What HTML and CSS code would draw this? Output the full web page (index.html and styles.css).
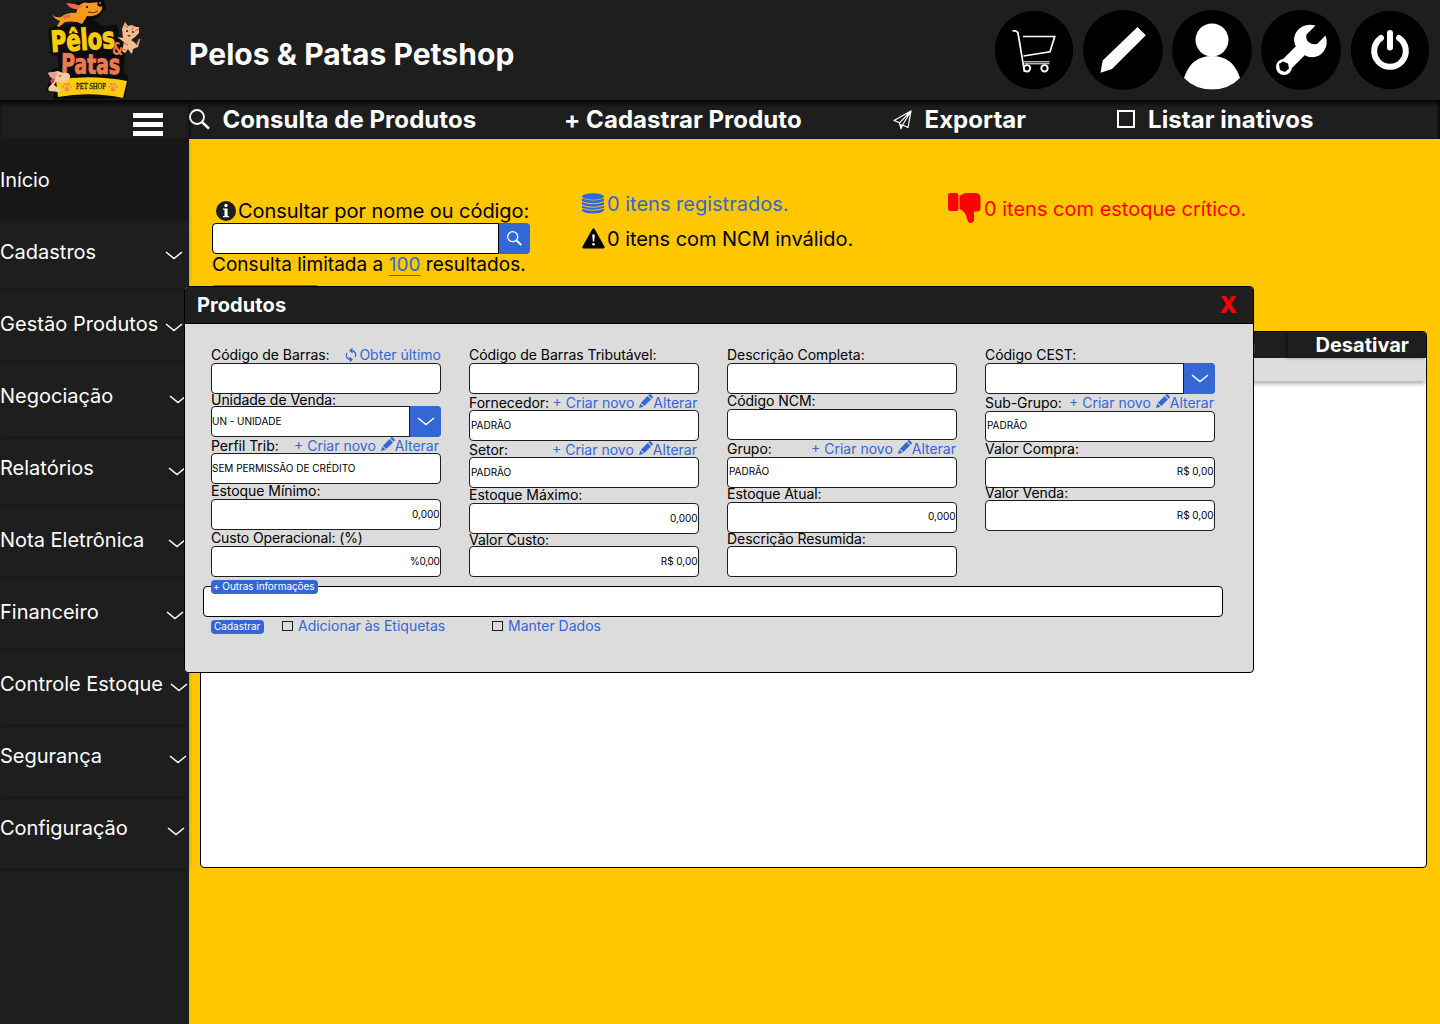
FILE: index.html
```html
<!DOCTYPE html>
<html lang="pt-BR">
<head>
<meta charset="utf-8">
<title>Pelos &amp; Patas Petshop</title>
<link rel="stylesheet" href="styles.css">
</head>
<body>
<svg class="defs" width="0" height="0" aria-hidden="true">
  <symbol id="chevron" viewBox="0 0 18 9"><path d="M1 1 9 7.6 17 1" fill="none" stroke="currentColor" stroke-width="1.5"/></symbol>
  <symbol id="search" viewBox="0 0 21 21"><circle cx="8" cy="8" r="7" fill="none" stroke="currentColor" stroke-width="1.8"/><path d="m13 13 7 6.6" stroke="currentColor" stroke-width="2.6"/></symbol>
  <symbol id="pencil" viewBox="0 0 14 14"><path d="m0 14 1.2-4.6 3.4 3.4zM1.9 8.7 8.6 2l3.4 3.4-6.7 6.7zM9.3 1.3 10.1.5q.8-.8 1.6 0l1.8 1.8q.8.8 0 1.6l-.8.8z" fill="currentColor"/></symbol>
  <symbol id="paw" viewBox="0 0 10 10"><g fill="#f58352"><path d="M5 4.6c2 0 3.3 4.500 1.400 4.600Q5 8.600 3.600 9.200C1.700 9.100 3 4.600 5 4.600z"/><circle cx="1.300" cy="4.800" r="1.100"/><circle cx="3.500" cy="2.300" r="1.200"/><circle cx="6.500" cy="2.300" r="1.200"/><circle cx="8.700" cy="4.800" r="1.100"/></g></symbol>
</svg>

<header class="topbar">
  <svg class="logo" viewBox="0 0 110 100" width="110" height="100">
    <path d="M10 29 52 21 64 28 76 26 79 40 84 50 82 72 87 78 84 97 15 98 16 90 8 90 14 70 20 69 19 54 12 54z" fill="#0c0c0b" stroke="#0c0c0b" stroke-width="3" stroke-linejoin="round"/>
    <path d="M36 2 50 0 64 0 66 8 59 17 48 22 34 18z" fill="#0c0c0b"/>
    <path d="M12 14Q15 18 21 17 28 12 36 13L38 7Q42 1 49 3L60 2Q64 6 61 11 57 17 47 16L44 21 42 24 37 22Q30 21 25 22L19 27 17 26 20 21Q14 19 12 14z" fill="#f7981f"/>
    <path d="M38 9Q31 10 26 3L34 4 42 6z" fill="#ee6b46"/>
    <path d="M23 17Q27 12 31 16 29 19 25 19z" fill="#ee6b46"/>
    <path d="M48 12Q54 14 58 11" fill="none" stroke="#5a2c0c" stroke-width="1"/>
    <ellipse cx="60.500" cy="4" rx="3.200" ry="2.800" fill="#070707"/><circle cx="60" cy="3" r=".8" fill="#fff"/>
    <circle cx="47" cy="7" r="1.100" fill="#111"/>
    <g font-family="DejaVu Sans Condensed, DejaVu Sans, sans-serif" font-weight="700">
      <text transform="translate(11.500 52) rotate(-4)" font-size="29" textLength="64" lengthAdjust="spacingAndGlyphs" fill="#fbcb0c" stroke="#fbcb0c" stroke-width="1.200">Pêlos</text>
      <text transform="translate(21 73) rotate(1)" font-size="27" textLength="59" lengthAdjust="spacingAndGlyphs" fill="#ed7950" stroke="#ed7950">Patas</text>
      <text x="72" y="55" font-size="18" textLength="11" lengthAdjust="spacingAndGlyphs" fill="#ed7950">&amp;</text>
    </g>
    <path d="M16 80Q50 74 87 81L83 98Q50 91 18 97z" fill="#facb0e"/>
    <use href="#paw" x="22" y="82" width="10" height="10"/><use href="#paw" x="68" y="82" width="10" height="10"/>
    <text x="36" y="88.500" font-family="Liberation Serif, serif" font-size="9" textLength="30" lengthAdjust="spacingAndGlyphs" fill="#25200a" stroke="#25200a" stroke-width=".3">PET SHOP</text>
    <path d="M8 73 18 71 23 73Q31 72 30 78L24 83 16 82 14 85 21 90 19 92 9 91Q7 88 11 85L14 80z" fill="#f3cda0"/>
    <path d="M8 73Q12 71 18 73L14 80 10 77z" fill="#ef9c91"/><path d="M10 80 15 78 14 83 11 83z" fill="#d93f62"/>
    <circle cx="31" cy="71" r="1.300" fill="#080808"/><circle cx="20" cy="76" r=".8" fill="#222"/>
    <path d="M85 22 88 26 92 25 96 27 99 27 99 33 95 37 91 40 94 42 97 45 99 39 100 40 98 47 93 49 92 54 90 52 88 49 85 53 82 51 84 42 77 37 83 38 82 29z" fill="#f3bd8e"/>
    <path d="m85 25 3 3M94 27l-3 3M99 29l-4 2M97 44l3-5M84 43l4 2M82 49l4 1" stroke="#e67f55" stroke-width="1.500"/>
    <circle cx="87" cy="31" r="1" fill="#222"/><circle cx="93" cy="32" r="1" fill="#222"/><path d="M87 35h4l-2 2z" fill="#7c3023"/>
  </svg>
  <h1>Pelos &amp; Patas Petshop</h1>
  <div class="actions">
    <svg viewBox="0 0 80 80"><circle class="ring" cx="40" cy="40" r="39.700"/><g fill="none" stroke="#fff" stroke-width="1.700"><path d="M18.500 20.800h3l2.400 1.700 6.600 39.300M29 26.500H60.700L56 41.800 29.500 46"/></g><path d="M30 51.800h25.500M30.500 53.800h25" stroke="#fff" stroke-width="1"/><g stroke="#fff" stroke-width="1.900"><circle cx="33" cy="58.300" r="3.200"/><circle cx="50.500" cy="58.300" r="3.200"/></g></svg>
    <svg viewBox="0 0 80 80"><circle cx="40" cy="40" r="40"/><path fill="#fff" d="M17.500 62.700 19.700 50.500 54.500 17 62.800 25.200 29 58.900z"/></svg>
    <svg viewBox="0 0 80 80"><circle cx="40" cy="40" r="40"/><circle cx="40" cy="30" r="16.500" fill="#fff"/><path fill="#fff" d="M12 68Q19 46 40 46T68 68Q57 79.500 40 79.500T12 68z"/></svg>
    <svg viewBox="0 0 80 80"><circle cx="40" cy="40" r="40"/><path d="M23 57 44 36" stroke="#fff" stroke-width="12.500"/><circle cx="23" cy="57" r="8" fill="#fff"/><path fill="#fff" d="M54.500 15.500Q43 12.500 36 21 31.500 27 34 35L45 46Q56 50 63 41 67.500 34 64.500 25.500L56 34Q51 35 47.500 32 44.500 29 45.500 24.500z"/><path d="m18 54 4-2.500 5 2 1 5-4 3.500-5-2z"/></svg>
    <svg viewBox="0 0 80 80"><circle class="ring" cx="40" cy="40" r="39.700"/><path d="M31 28A15.800 15.800 0 1 0 49 28M40 23V37.500" fill="none" stroke="#fff" stroke-width="6" stroke-linecap="round"/></svg>
  </div>
</header>

<div class="shell">
  <aside class="sidebar">
    <div class="burger"><i></i><i></i><i></i></div>
    <ul class="menu">
      <li>Início</li>
      <li>Cadastros<svg><use href="#chevron"/></svg></li>
      <li>Gestão Produtos<svg><use href="#chevron"/></svg></li>
      <li>Negociação<svg><use href="#chevron"/></svg></li>
      <li>Relatórios<svg><use href="#chevron"/></svg></li>
      <li>Nota Eletrônica<svg><use href="#chevron"/></svg></li>
      <li>Financeiro<svg><use href="#chevron"/></svg></li>
      <li>Controle Estoque<svg><use href="#chevron"/></svg></li>
      <li>Segurança<svg><use href="#chevron"/></svg></li>
      <li>Configuração<svg><use href="#chevron"/></svg></li>
    </ul>
  </aside>

  <main class="content">
    <nav class="toolbar">
      <a><svg class="i-search"><use href="#search"/></svg>Consulta de Produtos</a>
      <a>+ Cadastrar Produto</a>
      <a><svg class="i-plane" viewBox="0 0 19 20"><path d="M1 10.500 18 1 15 17.500 9.600 15 8 18.800 6.500 12.800zM6.500 12.800 18 1 9.600 15M8 18.800V14" fill="none" stroke="#fff" stroke-width="1.200" stroke-linejoin="round"/></svg>Exportar</a>
      <a><i class="box"></i>Listar inativos</a>
    </nav>

    <section class="summary">
      <div class="query">
        <label class="query-label"><svg width="20" height="20" viewBox="0 0 20 20"><circle cx="10" cy="10" r="10" fill="#1e1e1e"/><path d="M7 7.500h4.600V15H13v1.200H7V15h1.500V8.800H7z" fill="#fff"/><circle cx="10" cy="4.500" r="1.700" fill="#fff"/></svg>Consultar por nome ou código:</label>
        <div class="query-box"><span></span><b><svg width="15" height="15"><use href="#search"/></svg></b></div>
        <p>Consulta limitada a <u>100</u> resultados.</p>
        <div class="more"></div>
      </div>
      <div class="stats">
        <p class="blue"><svg width="22" height="21" viewBox="0 0 22 21"><ellipse cx="11" cy="3.500" rx="11" ry="3.300" fill="currentColor"/><path d="M0 5.500Q11 9.500 22 5.500V8.300Q11 12.300 0 8.300zM0 9.200Q11 13.200 22 9.200V11.800Q11 15.800 0 11.800zM0 12.700Q11 16.700 22 12.700V14.800Q11 18.800 0 14.800zM0 15.700Q11 19.700 22 15.700V17.500Q20 20.500 11 20.500T0 17.500z" fill="currentColor"/></svg>0 itens registrados.</p>
        <p class="ncm"><svg width="23" height="21" viewBox="0 0 23 21"><path d="M10.400 1Q11.500-.5 12.600 1L22.500 18.600Q23 20.500 21 20.500H2Q0 20.500.5 18.600z"/><path d="M10.200 6.500h2.600l-.6 7h-1.400z" fill="#fff"/><circle cx="11.500" cy="16.200" r="1.300" fill="#fff"/></svg>0 itens com NCM inválido.</p>
      </div>
      <div class="critical"><svg width="33" height="31" viewBox="0 0 33 31"><rect x="0" y="0" width="10.500" height="18" rx="2.500" fill="red"/><path d="M11.500 3Q15 0 19 0H27Q32.500 0 32.500 5V15Q32.500 18.500 29 18.500H25.500Q26.500 21 26 27 25.500 30 22.500 30 20 30 19 26 18 20.500 14.500 17.500L11.500 16z" fill="red"/></svg>0 itens com estoque crítico.</div>
    </section>

    <section class="table">
      <div class="thead"><span class="stub"></span><span class="th">Desativar</span></div>
      <div class="filter"></div>
    </section>
  </main>
</div>

<div class="modal">
  <div class="modal-head"><h2>Produtos</h2><b>X</b></div>
  <div class="form">
    <div class="col c1">
      <div class="field"><div class="lb">Código de Barras:<span><svg class="refresh" width="12" height="14" viewBox="0 0 12 14"><path d="M5 2.500h1.500A4 4.200 0 0 1 10 9M7 11.500H5.500A4 4.200 0 0 1 2 5M7.500.3 5 2.500l2.500 2.200M4.500 9.300 7 11.500l-2.500 2.200" fill="none" stroke="currentColor" stroke-width="1.300"/></svg>Obter último</span></div><div class="in"></div></div>
      <div class="field"><div class="lb">Unidade de Venda:</div><div class="in tight select">UN - UNIDADE<b><svg><use href="#chevron"/></svg></b></div></div>
      <div class="field"><div class="lb lk">Perfil Trib:<span>+ Criar novo <svg class="pen"><use href="#pencil"/></svg>Alterar</span></div><div class="in tight">SEM PERMISSÃO DE CRÉDITO</div></div>
      <div class="field"><div class="lb">Estoque Mínimo:</div><div class="in num">0,000</div></div>
      <div class="field"><div class="lb pct">Custo Operacional: (%)</div><div class="in num pct">%0,00</div></div>
    </div>
    <div class="col c2">
      <div class="field"><div class="lb">Código de Barras Tributável:</div><div class="in"></div></div>
      <div class="field"><div class="lb lk">Fornecedor:<span>+ Criar novo <svg class="pen"><use href="#pencil"/></svg>Alterar</span></div><div class="in">PADRÃO</div></div>
      <div class="field"><div class="lb lk">Setor:<span>+ Criar novo <svg class="pen"><use href="#pencil"/></svg>Alterar</span></div><div class="in">PADRÃO</div></div>
      <div class="field"><div class="lb">Estoque Máximo:</div><div class="in num">0,000</div></div>
      <div class="field"><div class="lb">Valor Custo:</div><div class="in num">R$ 0,00</div></div>
    </div>
    <div class="col c3">
      <div class="field"><div class="lb">Descrição Completa:</div><div class="in"></div></div>
      <div class="field"><div class="lb">Código NCM:</div><div class="in"></div></div>
      <div class="field"><div class="lb lk">Grupo:<span>+ Criar novo <svg class="pen"><use href="#pencil"/></svg>Alterar</span></div><div class="in">PADRÃO</div></div>
      <div class="field"><div class="lb">Estoque Atual:</div><div class="in num">0,000</div></div>
      <div class="field"><div class="lb">Descrição Resumida:</div><div class="in"></div></div>
    </div>
    <div class="col c4">
      <div class="field"><div class="lb">Código CEST:</div><div class="in select"><b><svg><use href="#chevron"/></svg></b></div></div>
      <div class="field"><div class="lb lk">Sub-Grupo:<span>+ Criar novo <svg class="pen"><use href="#pencil"/></svg>Alterar</span></div><div class="in">PADRÃO</div></div>
      <div class="field"><div class="lb">Valor Compra:</div><div class="in num">R$ 0,00</div></div>
      <div class="field"><div class="lb">Valor Venda:</div><div class="in num">R$ 0,00</div></div>
    </div>
  </div>
  <div class="extra"><span class="pill">+ Outras informações</span></div>
  <div class="foot"><span class="pill">Cadastrar</span><label><i></i>Adicionar às Etiquetas</label><label><i></i>Manter Dados</label></div>
</div>
</body>
</html>
```
FILE: styles.css
```css
* { box-sizing: border-box; }
body {
  margin: 0;
  width: 1440px;
  height: 1024px;
  overflow: hidden;
  position: relative;
  background: #ffc700;
  font-family: Inter, sans-serif;
  font-size: 20px;
  color: #000;
}
h1, h2, p, ul { margin: 0; padding: 0; }
.defs { position: absolute; }
svg { flex: none; }

.topbar {
  display: flex;
  align-items: center;
  height: 100px;
  padding: 0 10px 0 40px;
  background: #1e1e1e;
}
.topbar h1 {
  margin-left: 39px;
  padding-top: 8px;
  font-size: 30px;
  line-height: 36px;
  letter-spacing: .05px;
  color: #fff;
  white-space: nowrap;
}
.actions { display: flex; gap: 9px; margin-left: auto; }
.actions svg { width: 80px; height: 80px; }
.ring { stroke: #333; stroke-width: .5; }

.shell { display: flex; height: 924px; }
.sidebar { width: 189px; background: #1e1e1e; color: #fff; flex: none; }
.burger {
  height: 39px;
  padding: 13px 26px 0 0;
  display: flex;
  flex-direction: column;
  align-items: flex-end;
  gap: 4px;
  box-shadow: inset 0 5px 4px -1px rgba(0, 0, 0, .75);
}
.burger i { width: 30px; height: 5px; background: #fff; }
.menu { list-style: none; }
.menu li {
  display: flex;
  justify-content: space-between;
  height: 72px;
  padding: 24px 2px 0 0;
  line-height: 24px;
  white-space: nowrap;
  box-shadow: 0 2px 4px rgba(0, 0, 0, .25);
}
.menu svg { width: 18px; height: 9px; margin-top: 11px; }
.menu li:nth-child(1) { height: 79px; padding-top: 29px; background: #171717; letter-spacing: -.1px; }
.menu li:nth-child(2) { height: 70px; padding: 22px 6px 0 0; }
.menu li:nth-child(3) { padding-right: 6px; letter-spacing: .05px; }
.menu li:nth-child(4) { height: 76px; }
.menu li:nth-child(5) { height: 68px; padding: 20px 3px 0 0; }
.menu li:nth-child(6) { padding-right: 3px; }
.menu li:nth-child(7) { padding-right: 5px; }
.menu li:nth-child(8) { height: 76px; padding-right: 1px; }
.menu li:nth-child(9) { padding-top: 20px; }
.menu li:nth-child(10) { padding: 20px 4px 0 0; letter-spacing: -.06px; }

.content { width: 1251px; }
.toolbar {
  display: grid;
  grid-template-columns: 375px 329px 224px 1fr;
  height: 39px;
  background: #1e1e1e;
  box-shadow: inset 0 5px 4px -1px rgba(0, 0, 0, .75), inset -3px 0 3px -1px rgba(0, 0, 0, .6), inset 2px 0 2px -1px rgba(0, 0, 0, .5);
  color: #fff;
  font-size: 24px;
  font-weight: 700;
  letter-spacing: .06px;
}
.toolbar a { display: flex; align-items: center; white-space: nowrap; }
.i-search { width: 21px; height: 21px; margin-right: 12.500px; }
.i-plane { width: 19px; height: 20px; margin-right: 12.500px; }
.box { width: 18px; height: 18px; margin: -1px 13px 0 0; border: 2px solid #fff; }

.summary {
  display: grid;
  grid-template-columns: 370px 366px 1fr;
  height: 192px;
  padding: 54px 0 0 23px;
}
.query-label { display: flex; align-items: center; gap: 2px; height: 30px; padding: 6px 0 0 4px; letter-spacing: -.06px; white-space: nowrap; }
.query-box { display: flex; width: 318px; height: 31px; }
.query-box span { width: 287px; background: #fff; border: 1px solid #000; border-radius: 4px 0 0 4px; }
.query-box b { display: grid; place-items: center; flex: 1; background: #3367d6; border-radius: 0 4px 4px 0; color: #fff; }
.query p { height: 22px; font-size: 19px; line-height: 21px; letter-spacing: .03px; white-space: nowrap; }
.query u { color: #3367d6; text-decoration-thickness: 1px; text-underline-offset: 4px; }
.more { width: 107px; height: 20px; margin-top: 9px; background: #3367d6; border-radius: 4px; }
.blue { color: #3367d6; }
.stats p { display: flex; align-items: center; gap: 2px; height: 35px; white-space: nowrap; }
.stats p:first-child { height: 21px; margin-bottom: 7px; }
.stats svg { margin-right: 1px; }
.stats .ncm { gap: 1px; letter-spacing: -.05px; }
.critical { display: flex; align-items: center; gap: 3px; height: 31px; color: red; white-space: nowrap; }

.table {
  width: 1227px;
  height: 537px;
  margin-left: 11px;
  background: #fff;
  border: 1px solid #000;
  border-radius: 4px;
  overflow: hidden;
}
.thead { display: flex; justify-content: flex-end; height: 26px; background: #1e1e1e; color: #fff; font-weight: 700; line-height: 26px; }
.stub { width: 34px; background: linear-gradient(#444, #444) 0 70% / 1px 9px no-repeat; }
.th { width: 138px; padding-left: 27.500px; box-shadow: -2px 0 3px rgba(0, 0, 0, .4); }
.filter { height: 23px; margin-right: 1px; background: #dcdcdc; box-shadow: 0 3px 4px rgba(0, 0, 0, .3); }

.modal {
  position: absolute;
  left: 184px;
  top: 286px;
  width: 1070px;
  height: 387px;
  background: #dcdcdc;
  border: 1px solid #000;
  border-radius: 4px;
  overflow: hidden;
  font-size: 14px;
}
.modal-head {
  display: flex;
  justify-content: space-between;
  height: 37px;
  padding: 0 16px 0 12px;
  background: #1e1e1e;
  border-bottom: 1px solid #000;
  color: #fff;
  line-height: 36px;
}
.modal-head h2 { font-size: 20px; letter-spacing: .08px; }
.modal-head b { font-size: 23px; line-height: 37px; color: red; font-weight: 800; }
.form { display: flex; gap: 28px; height: 262px; padding: 24px 0 0 26px; }
.col { width: 230px; }
.lb {
  display: flex;
  justify-content: space-between;
  align-items: center;
  height: 15px;
  padding-bottom: 2px;
  position: relative;
  white-space: nowrap;
  line-height: 17px;
  letter-spacing: -.04px;
}
.lb.pct { letter-spacing: -.12px; }
.lb span { display: flex; align-items: center; color: #3367d6; white-space: pre; letter-spacing: 0; }
.lb.lk { padding: 0 2px 0 0; }
.refresh { margin-right: 2px; }
.pen { width: 14px; height: 14px; margin: -3px 0 0 1px; }
.in {
  display: flex;
  align-items: center;
  height: 31px;
  padding: 0 1px 2px;
  background: #fff;
  border: 1px solid #1e1e1e;
  border-radius: 4px;
  font-size: 10px;
  letter-spacing: -.03px;
}
.in.tight { padding-left: 0; }
.in.num { justify-content: flex-end; padding-right: .5px; }
.in.pct { letter-spacing: -.3px; }
.in.select { padding-right: 0; justify-content: space-between; }
.in b {
  display: grid;
  place-items: center;
  width: 32px;
  height: 31px;
  margin: 0 -1px -2px auto;
  background: #3367d6;
  border-left: 1px solid #1e1e1e;
  border-radius: 0 4px 4px 0;
  color: #fff;
}
.in b svg { width: 18px; height: 9px; }
.c1 .field:nth-child(2) .lb { height: 12px; }
.c1 .field:nth-child(3) .lb, .c1 .field:nth-child(5) .lb { height: 16px; }
.c2 .field:nth-child(2) .lb, .c2 .field:nth-child(3) .lb { height: 16px; }
.c2 .field:nth-child(2) .lk { padding-right: 1.500px; }
.c2 .field:nth-child(5) .lb { height: 12px; }
.c3 .field:nth-child(3) .lb { height: 16.500px; padding-right: 1px; }
.c3 .field:nth-child(4) .lb { height: 14px; }
.c3 .field:nth-child(5) .lb { height: 13.500px; }
.c4 .field:nth-child(2) .lb { height: 16.500px; padding-right: 1px; }
.c4 .field:nth-child(4) .lb { height: 12.500px; }

.extra { width: 1020px; height: 31px; margin: 0 0 0 18px; padding-left: 7px; background: #fff; border: 1px solid #000; border-radius: 4px; }
.pill {
  display: block;
  width: max-content;
  height: 14px;
  padding: 0 2px;
  background: #3367d6;
  border-radius: 4px;
  color: #fff;
  font-size: 10px;
  line-height: 13px;
}
.extra .pill { width: 107px; margin-top: -7px; letter-spacing: -.05px; }
.foot { display: flex; align-items: center; height: 20px; padding-left: 26px; color: #3367d6; }
.foot .pill { width: 53px; padding: 0 3px; margin-right: 18px; }
.foot label { display: flex; align-items: center; width: 210px; height: 17px; margin-top: -3px; line-height: 17px; white-space: nowrap; }
.foot i { width: 11px; height: 10px; margin-right: 5px; border: 1px solid #1e1e1e; }
```
